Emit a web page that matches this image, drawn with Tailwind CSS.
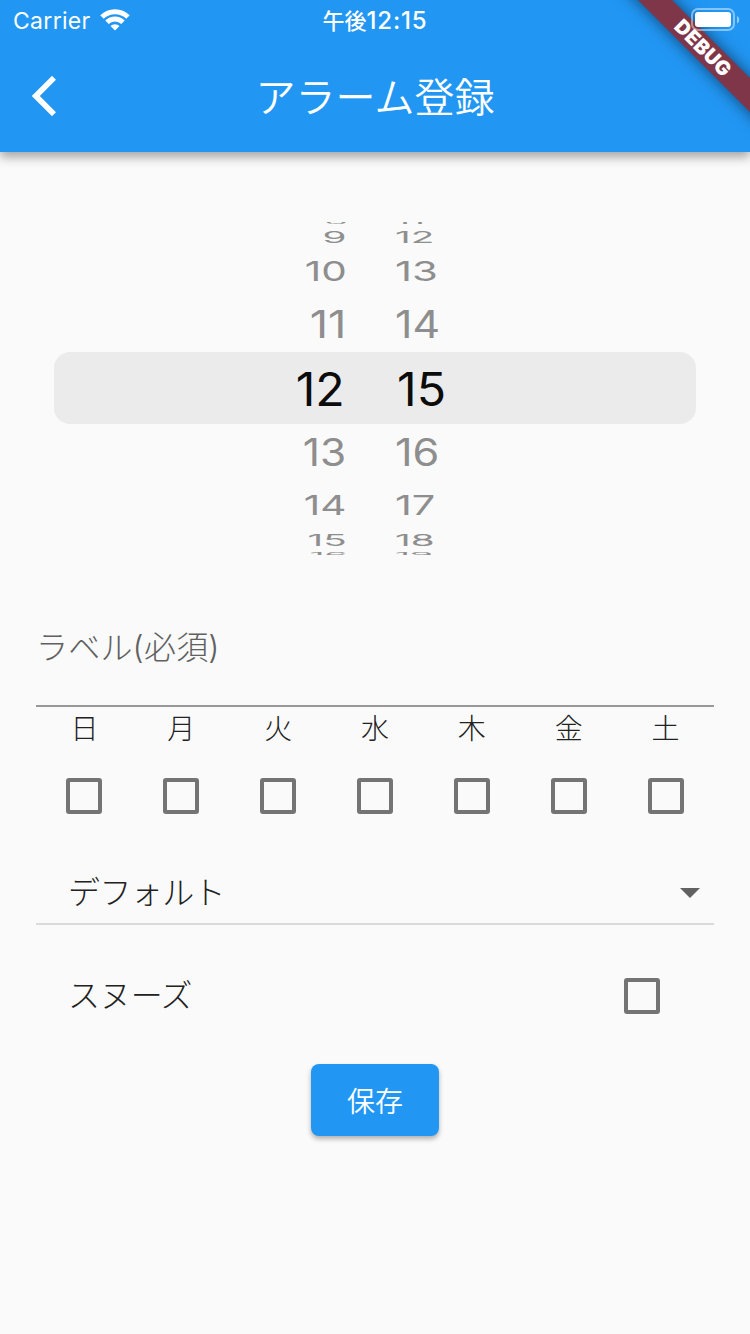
<!DOCTYPE html>
<html lang="ja">
<head>
  <meta charset="UTF-8">
  <meta name="viewport" content="width=device-width, initial-scale=1.0">
  <title>アラーム登録</title>
  <script src="https://cdn.jsdelivr.net/npm/@tailwindcss/browser@4"></script>
</head>
<body class="bg-[#fafafa] text-[#212121] h-[1334px] overflow-hidden relative font-light font-[Inter,'Noto_Sans_CJK_JP',sans-serif]">
  <!-- ヘッダー -->
  <header class="h-[152px] bg-[#2196f3] text-white shadow-[0_5px_10px_rgba(0,0,0,0.35)] font-normal">
    <div class="h-10 pt-[2px] grid grid-cols-3 items-center text-[23px]">
      <div class="flex items-center gap-[9px] pl-[13px]">
        <span class="tracking-[0.3px]">Carrier</span>
        <svg class="w-[30px] h-[23px] mb-1" viewBox="0 0 30 23" fill="none" stroke="#fff" stroke-width="5">
          <path d="M2 9a18.6 18.6 0 0 1 26 0" />
          <path d="M7 14.2a11.6 11.6 0 0 1 16 0" />
          <path d="M15 22.5l-4.500-4.500a6.500 6.500 0 0 1 9 0z" fill="#fff" stroke="none" />
        </svg>
      </div>
      <div class="text-center font-medium text-[22px] whitespace-nowrap">午後<span class="text-[24px] font-medium tracking-[0.8px]">12:15</span></div>
    </div>
    <div class="h-28 grid grid-cols-[100px_1fr_100px] items-center">
      <svg class="ml-8 w-6 h-10" viewBox="0 0 24 40" fill="none" stroke="#fff" stroke-width="5.6">
        <path d="M22 1.800L3.800 20 22 38.200" />
      </svg>
      <h1 class="pt-1 text-center text-[40px] font-[350]">アラーム登録</h1>
    </div>
  </header>

  <!-- DEBUGバナー -->
  <div class="absolute top-0 right-0 w-[150px] h-[152px] overflow-hidden">
    <div class="absolute left-[2px] top-[35px] w-[200px] h-6 rotate-45 bg-[#7f3649] shadow-[0_0_16px_rgba(0,0,0,0.55)] flex items-center justify-center pl-[3px] text-white text-[20px] font-black leading-none tracking-[0.3px]">DEBUG</div>
  </div>
  <svg class="absolute left-[691px] top-[8px] w-[49px] h-[23px]" viewBox="0 0 49 23">
    <rect x="1" y="1" width="42" height="21" rx="6" fill="none" stroke="#fff" stroke-opacity=".45" stroke-width="2" />
    <rect x="4" y="4" width="36" height="15" rx="3" fill="#fff" />
    <path d="M46 8c3 1.500 3 6 0 7.500z" fill="#fff" fill-opacity=".5" />
  </svg>

  <main class="px-9 pt-[70px]">
    <!-- 時刻ピッカー -->
    <div class="h-[333px] overflow-hidden flex flex-col text-[46px] leading-none font-normal text-[#8e8e8e]">
      <div class="h-[5px] grid grid-cols-[311px_1fr] gap-x-[48px] content-center">
        <span class="justify-self-end origin-right scale-x-[0.8] scale-y-[0.14] -translate-y-[3px]">8</span>
        <span class="justify-self-start origin-left scale-x-[0.8] scale-y-[0.14] -translate-y-[3px]">11</span>
      </div>
      <div class="h-[19px] grid grid-cols-[311px_1fr] gap-x-[48px] content-center">
        <span class="justify-self-end origin-right scale-x-[0.84] scale-y-[0.34]">9</span>
        <span class="justify-self-start origin-left scale-x-[0.84] scale-y-[0.34]">12</span>
      </div>
      <div class="h-[50px] grid grid-cols-[311px_1fr] gap-x-[48px] content-center">
        <span class="justify-self-end origin-right scale-x-[0.88] scale-y-[0.6]">10</span>
        <span class="justify-self-start origin-left scale-x-[0.91] scale-y-[0.6]">13</span>
      </div>
      <div class="h-[56px] grid grid-cols-[310px_1fr] gap-x-[49px] content-center">
        <span class="justify-self-end origin-right scale-x-[0.98] scale-y-[0.82]">11</span>
        <span class="justify-self-start origin-left scale-x-[0.93] scale-y-[0.82]">14</span>
      </div>
      <div class="h-[72px] shrink-0 mx-[18px] pt-px rounded-2xl bg-[#ebebeb] text-[#0c0c0c] grid grid-cols-[291px_1fr] gap-x-[52px] content-center">
        <span class="justify-self-end origin-right scale-x-[1.05]">12</span>
        <span class="justify-self-start origin-left scale-x-[1.05]">15</span>
      </div>
      <div class="h-[56px] grid grid-cols-[310px_1fr] gap-x-[49px] content-center">
        <span class="justify-self-end origin-right scale-x-[0.92] scale-y-[0.82]">13</span>
        <span class="justify-self-start origin-left scale-x-[0.94] scale-y-[0.82]">16</span>
      </div>
      <div class="h-[50px] grid grid-cols-[310px_1fr] gap-x-[49px] content-center">
        <span class="justify-self-end origin-right scale-x-[0.88] scale-y-[0.6]">14</span>
        <span class="justify-self-start origin-left scale-x-[0.9] scale-y-[0.6]">17</span>
      </div>
      <div class="h-[19px] grid grid-cols-[311px_1fr] gap-x-[48px] content-center">
        <span class="justify-self-end origin-right scale-x-[0.84] scale-y-[0.34]">15</span>
        <span class="justify-self-start origin-left scale-x-[0.84] scale-y-[0.34]">18</span>
      </div>
      <div class="h-[5px] grid grid-cols-[311px_1fr] gap-x-[48px] content-center">
        <span class="justify-self-end origin-right scale-x-[0.8] scale-y-[0.14] translate-y-[3px]">16</span>
        <span class="justify-self-start origin-left scale-x-[0.8] scale-y-[0.14] translate-y-[3px]">19</span>
      </div>
    </div>

    <!-- ラベル入力 -->
    <div class="mt-[30px] h-[122px] pt-[5px] border-b-2 border-[#989898] flex items-center text-[32px] tracking-[0.2px] text-[#606060]">ラベル(必須)</div>

    <!-- 曜日 -->
    <div class="pt-px grid grid-cols-7 text-center text-[28px] leading-[42px]">
      <span>日</span>
      <span>月</span>
      <span>火</span>
      <span>水</span>
      <span>木</span>
      <span>金</span>
      <span>土</span>
    </div>
    <div class="mt-7 grid grid-cols-7 justify-items-center">
      <div class="size-9 border-4 border-[#747474] rounded-[3px]"></div>
      <div class="size-9 border-4 border-[#747474] rounded-[3px]"></div>
      <div class="size-9 border-4 border-[#747474] rounded-[3px]"></div>
      <div class="size-9 border-4 border-[#747474] rounded-[3px]"></div>
      <div class="size-9 border-4 border-[#747474] rounded-[3px]"></div>
      <div class="size-9 border-4 border-[#747474] rounded-[3px]"></div>
      <div class="size-9 border-4 border-[#747474] rounded-[3px]"></div>
    </div>

    <!-- サウンド -->
    <div class="mt-[45px] h-[66px] border-b-2 border-[#dadada] flex items-center justify-between pl-8 pr-[14px] text-[32px]">
      <span class="pt-[3px] tracking-[-0.6px]">デフォルト</span>
      <svg class="w-5 h-[10px] mt-[3px]" viewBox="0 0 20 10" fill="#616161"><path d="M0 0h20L10 10z" /></svg>
    </div>

    <!-- スヌーズ -->
    <div class="mt-[35px] h-[72px] flex items-center justify-between pl-8 pr-[54px] text-[32px]">
      <span class="tracking-[-0.6px]">スヌーズ</span>
      <div class="size-9 border-4 border-[#747474] rounded-[3px]"></div>
    </div>

    <button class="mt-8 pt-[3px] mx-auto block w-32 h-[72px] rounded-lg bg-[#2196f3] text-white text-[28px] font-[350] shadow-[0_3px_5px_rgba(0,0,0,0.3)]">保存</button>
  </main>
</body>
</html>
